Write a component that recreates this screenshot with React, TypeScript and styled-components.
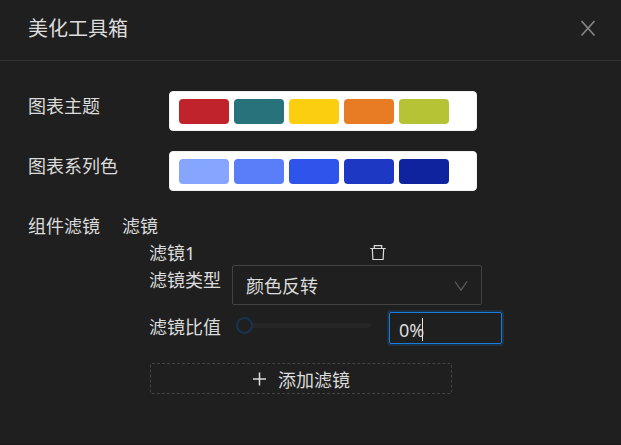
import React, { useState } from "react";
import styled, { createGlobalStyle } from "styled-components";

const GlobalStyle = createGlobalStyle`
  *, *::before, *::after { box-sizing: border-box; }
  body {
    margin: 0;
    background: #1f1f1f;
    color: #dcdcdc;
    font-family: "Noto Sans", "Noto Sans CJK SC", sans-serif;
    font-size: 18px;
  }
  button, input, select { font: inherit; color: inherit; margin: 0; }
`;

const Drawer = styled.main`
  min-height: 100vh;
  background: #1f1f1f;
  border-bottom: 1px solid #1b1719;
`;

const Header = styled.header`
  display: flex;
  align-items: center;
  justify-content: space-between;
  height: 61px;
  padding: 0 24px 4px 28px;
  border-bottom: 1px solid #303030;
`;

const Title = styled.h1`
  margin: 0;
  font-family: "Noto Sans CJK SC", sans-serif;
  font-size: 20px;
  font-weight: 400;
  line-height: 28px;
`;

const IconButton = styled.button`
  display: flex;
  padding: 0;
  border: 0;
  background: none;
  cursor: pointer;
`;

const Body = styled.div`
  padding: 30px 28px;
`;

const FormRow = styled.section<{ $labelWidth: number }>`
  display: grid;
  grid-template-columns: ${(p) => p.$labelWidth}px minmax(0, 1fr);
  margin-bottom: 20px;
`;

const Label = styled.label`
  line-height: 30px;
  white-space: nowrap;
`;

const Caption = styled.div`
  line-height: 30px;
  white-space: nowrap;
`;

const Palette = styled.button`
  display: flex;
  gap: 5px;
  width: 100%;
  max-width: 308px;
  height: 40px;
  padding: 7px 9px;
  border: 1px solid #f0f0f0;
  border-radius: 4px;
  background: #fff;
  cursor: pointer;
`;

const Swatch = styled.span<{ $color: string }>`
  width: 50px;
  height: 25px;
  border-radius: 4px;
  background: ${(p) => p.$color};
`;

const FilterList = styled.div`
  padding-left: 27px;
`;

const FilterHead = styled.div`
  display: flex;
  align-items: center;
  justify-content: space-between;
  max-width: 237px;
  height: 24px;
  line-height: 24px;
`;

const FilterField = styled.div`
  display: grid;
  grid-template-columns: 83px minmax(0, 1fr);
  margin-bottom: 7px;
`;

const SelectBox = styled.div`
  position: relative;
  max-width: 250px;
  svg {
    position: absolute;
    top: 15px;
    right: 14px;
    pointer-events: none;
  }
`;

const Select = styled.select`
  appearance: none;
  display: block;
  width: 100%;
  height: 40px;
  padding: 2px 36px 0 13px;
  border: 1px solid #434343;
  border-radius: 2px;
  background: transparent;
  outline: 0;
`;

const RatioControls = styled.div`
  display: flex;
  gap: 18px;
`;

const Slider = styled.input`
  appearance: none;
  width: 135px;
  height: 27px;
  margin-left: 4px;
  background: transparent;
  outline: 0;
  &::-webkit-slider-runnable-track {
    height: 5px;
    border-radius: 3px;
    background: linear-gradient(to right, transparent 8px, #262626 8px);
  }
  &::-webkit-slider-thumb {
    appearance: none;
    width: 17px;
    height: 17px;
    margin-top: -6px;
    border: 2px solid #153450;
    border-radius: 50%;
    background: #1f1f1f;
  }
`;

const RatioBox = styled.div`
  position: relative;
  width: 113px;
`;

const RatioInput = styled.input`
  display: block;
  width: 100%;
  height: 32px;
  padding: 4px 9px 0;
  border: 1px solid #177ddc;
  border-radius: 2px;
  outline: 0;
  background: transparent;
  box-shadow: 0 0 0 2px rgba(23, 125, 220, 0.2);
  caret-color: transparent;
`;

const Caret = styled.span`
  position: absolute;
  top: 6px;
  left: 33px;
  width: 1px;
  height: 23px;
  background: #e6e6e6;
  pointer-events: none;
`;

const AddButton = styled.button`
  display: flex;
  align-items: center;
  justify-content: center;
  gap: 11px;
  width: 100%;
  max-width: 302px;
  height: 31px;
  margin: 19px 0 0 1px;
  padding: 2px 0 0;
  border: 1px dashed #434343;
  border-radius: 2px;
  background: transparent;
  line-height: 28px;
  cursor: pointer;
`;

const themeColors = ["#c1232b", "#27727b", "#fcce10", "#e87c25", "#b5c334"];
const seriesColors = ["#85a5ff", "#597ef7", "#2f54eb", "#1d39c4", "#10239e"];

const CloseIcon = () => (
  <svg width="18" height="18" viewBox="0 0 18 18" fill="none" stroke="#858585" strokeWidth="1.7" aria-hidden="true">
    <path d="M2.5 2 L15.5 16.5 M15.5 2 L2.5 16.5" />
  </svg>
);

const TrashIcon = () => (
  <svg width="16" height="16" viewBox="0 0 16 16" fill="none" stroke="#dcdcdc" strokeWidth="1.2" aria-hidden="true">
    <path d="M0.3 3.5H15.7M4.3 3.5V0.7H11.7V3.5M2.3 3.5L2.9 14.5H13.1L13.7 3.5" />
  </svg>
);

const ArrowIcon = () => (
  <svg width="14" height="12" viewBox="0 0 14 12" fill="none" stroke="#5c5c5c" strokeWidth="1.3" aria-hidden="true">
    <path d="M1 1.5L7 10L13 1.5" />
  </svg>
);

const PlusIcon = () => (
  <svg width="15" height="15" viewBox="0 0 15 15" fill="none" stroke="#dcdcdc" strokeWidth="1.5" aria-hidden="true">
    <path d="M1 7H14M7.5 0.5V13.5" />
  </svg>
);

interface PaletteRowProps {
  id: string;
  label: string;
  colors: string[];
}

const PaletteRow = ({ id, label, colors }: PaletteRowProps) => (
  <FormRow $labelWidth={141}>
    <Label htmlFor={id}>{label}</Label>
    <Palette id={id} type="button">
      {colors.map((color) => (
        <Swatch key={color} $color={color} />
      ))}
    </Palette>
  </FormRow>
);

export default function App() {
  const [ratio, setRatio] = useState(0);

  return (
    <>
      <GlobalStyle />
      <Drawer>
        <Header>
          <Title>美化工具箱</Title>
          <IconButton type="button" aria-label="关闭">
            <CloseIcon />
          </IconButton>
        </Header>
        <Body>
          <PaletteRow id="theme" label="图表主题" colors={themeColors} />
          <PaletteRow id="series" label="图表系列色" colors={seriesColors} />
          <FormRow $labelWidth={94}>
            <Caption>组件滤镜</Caption>
            <div>
              <Caption>滤镜</Caption>
              <FilterList>
                <FilterHead>
                  <span>滤镜1</span>
                  <IconButton type="button" aria-label="删除">
                    <TrashIcon />
                  </IconButton>
                </FilterHead>
                <FilterField>
                  <Label htmlFor="kind">滤镜类型</Label>
                  <SelectBox>
                    <Select id="kind">
                      <option>颜色反转</option>
                    </Select>
                    <ArrowIcon />
                  </SelectBox>
                </FilterField>
                <FilterField>
                  <Label htmlFor="ratio">滤镜比值</Label>
                  <RatioControls>
                    <Slider
                      type="range"
                      aria-label="滤镜比值"
                      min={0}
                      max={100}
                      value={ratio}
                      onChange={(e) => setRatio(Number(e.target.value))}
                    />
                    <RatioBox>
                      <RatioInput
                        id="ratio"
                        value={`${ratio}%`}
                        onChange={(e) => setRatio(Math.min(100, parseInt(e.target.value, 10) || 0))}
                      />
                      <Caret />
                    </RatioBox>
                  </RatioControls>
                </FilterField>
                <AddButton type="button">
                  <PlusIcon />
                  添加滤镜
                </AddButton>
              </FilterList>
            </div>
          </FormRow>
        </Body>
      </Drawer>
    </>
  );
}
